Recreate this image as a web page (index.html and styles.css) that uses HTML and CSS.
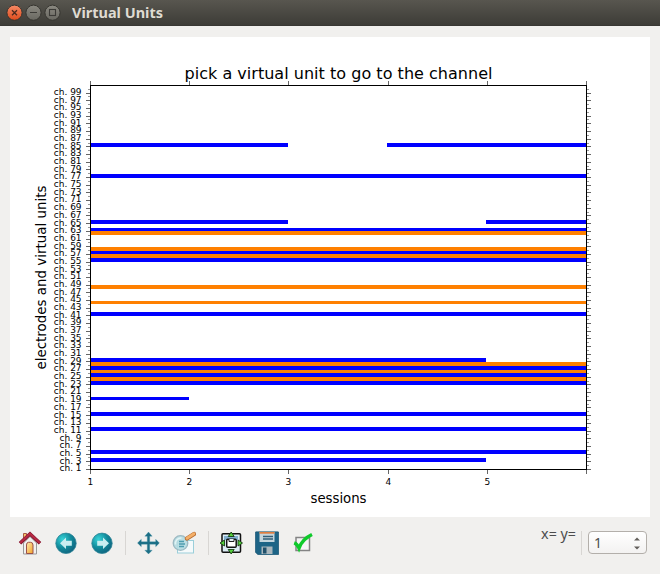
FILE: index.html
```html
<!DOCTYPE html>
<html lang="en">
<head>
<meta charset="utf-8">
<title>Virtual Units</title>
<link rel="stylesheet" href="styles.css">
</head>
<body>
<div class="window">
  <header class="titlebar">
    <svg class="controls" width="56" height="18" viewBox="0 0 56 18">
      <defs>
        <linearGradient id="closeFill" x1="0" y1="0" x2="0" y2="1"><stop offset="0" stop-color="#f58a66"/><stop offset="1" stop-color="#df4b1c"/></linearGradient>
        <linearGradient id="greyFill" x1="0" y1="0" x2="0" y2="1"><stop offset="0" stop-color="#8b8981"/><stop offset="1" stop-color="#696861"/></linearGradient>
      </defs>
      <circle cx="8.5" cy="8.7" r="7.6" fill="url(#closeFill)" stroke="#35342f"/>
      <circle cx="27.5" cy="8.7" r="7.6" fill="url(#greyFill)" stroke="#35342f"/>
      <circle cx="46.5" cy="8.7" r="7.6" fill="url(#greyFill)" stroke="#35342f"/>
      <path d="M6 6.2l5 5M11 6.2l-5 5" stroke="#4c2a1e" stroke-width="1.3"/>
      <path d="M24 8.5h7" stroke="#3c3b37"/>
      <rect x="43.5" y="5.5" width="6" height="6" fill="none" stroke="#3c3b37" stroke-width="1.1"/>
    </svg>
    <svg class="caption" width="100" height="24"><text x="0" y="17" textLength="91" lengthAdjust="spacingAndGlyphs">Virtual Units</text></svg>
  </header>
  <main class="figure">
    <svg id="chart" width="640" height="480" viewBox="10 37 640 480">
      <text class="title" x="184.5" y="79" textLength="308">pick a virtual unit to go to the channel</text>
      <g id="bars" shape-rendering="crispEdges"></g>
      <rect x="90.5" y="85.5" width="496" height="384" class="frame"/>
      <g id="ticks" shape-rendering="crispEdges"></g>
      <g id="labels"></g>
      <text class="axis" x="310.5" y="503" textLength="56">sessions</text>
      <text class="axis" transform="translate(45.5 369.5) rotate(-90)" textLength="184">electrodes and virtual units</text>
    </svg>
  </main>
  <footer class="toolbar">
    <svg class="icon" width="24" height="24" viewBox="0 0 24 24">
      <defs><linearGradient id="door" x1="0" x2="1" y2="1"><stop offset="0" stop-color="#ffe9b0"/><stop offset="1" stop-color="#f2a32a"/></linearGradient></defs>
      <path d="M5.500 10V2.500h3v6" fill="#f7c66b" stroke="#a95743"/>
      <path d="M5.500 12L12 5.500l6.500 6.500v11h-13z" fill="#f1f0ef" stroke="#999"/>
      <path d="M8.500 22.500v-8.500q0-2.700 2-2.700h2q2.500 0 2.500 2.700v8.500z" fill="url(#door)" stroke="#9c5148"/>
      <path d="M2 12.200L12 3l10 9.200" fill="none" stroke="#7d1730" stroke-width="3.600"/>
      <path d="M2 12L12 2.800 22 12" fill="none" stroke="#b72943" stroke-width="2.200"/>
    </svg>
    <svg class="icon" width="24" height="24" viewBox="0 0 24 24">
      <defs><radialGradient id="ball" cx=".33" cy=".3" r=".75"><stop offset="0" stop-color="#38d3d8"/><stop offset=".55" stop-color="#128c9c"/><stop offset="1" stop-color="#10647f"/></radialGradient></defs>
      <circle cx="12" cy="12.300" r="10.200" fill="url(#ball)" stroke="#2b8395" stroke-width=".8"/>
      <path d="M6 12.300l6-5.800v3.300h5.800v5H12v3.300z" fill="#c9eef1"/>
    </svg>
    <svg class="icon" width="24" height="24" viewBox="0 0 24 24">
      <circle cx="12" cy="12.300" r="10.200" fill="url(#ball)" stroke="#2b8395" stroke-width=".8"/>
      <path d="M19 12.300l-6-5.800v3.300H7.200v5H13v3.300z" fill="#c9eef1"/>
    </svg>
    <span class="divider"></span>
    <svg class="icon" width="24" height="24" viewBox="0 0 24 24">
      <path d="M12.500 1l3.700 4.200h-2.500v5.600h6V8.300l3.700 3.700-3.700 3.700v-2.500h-6v6h2.500L12.500 23l-3.700-3.800h2.500v-6h-6v2.500L1.500 12l3.800-3.700v2.500h6V5.200H8.800z" fill="#1b6f86" stroke="#398aa0" stroke-width=".3"/>
    </svg>
    <svg class="icon zoomer" width="24" height="24" viewBox="0 0 24 24">
      <rect x="5.500" y="9.500" width="16" height="12.500" fill="#f5fafb" stroke="#9bcfda"/>
      <circle cx="8.500" cy="12" r="7.300" fill="#b5dce1" fill-opacity=".9" stroke="#9cb9c2" stroke-width="1.300"/>
      <path d="M3.500 13.500a5.500 5.500 0 0 1 6-6.500" fill="none" stroke="#e1f3f4" stroke-width="1.500"/>
      <path d="M7 10.500h5M7 13h6M7 15.500h5" stroke="#4f9daf" stroke-width="1.300"/>
      <path d="M15 7.500L22 3" stroke="#b56c32" stroke-width="4.300" stroke-linecap="round"/>
      <path d="M15 7.200L22 2.800" stroke="#f4af68" stroke-width="2.800" stroke-linecap="round"/>
    </svg>
    <span class="divider"></span>
    <svg class="icon" width="24" height="24" viewBox="0 0 24 24">
      <rect x="3" y="2.800" width="18.500" height="18.500" rx="1" fill="#dcecf5" stroke="#111" stroke-width="1.500"/>
      <path d="M5 5h14v4H5z" fill="#83b1d1"/>
      <path d="M12.200 1l3 4.500h-6zM12.200 23l3-4.500h-6zM1 12l4.500-3v6zM23.500 12L19 9v6z" fill="#55cf3e" stroke="#173c12" stroke-width=".9"/>
      <rect x="7.700" y="8.200" width="9.500" height="8" rx="1" fill="#fff" stroke="#111" stroke-width="1.500"/>
      <path d="M10 8v2.500h5V8" fill="#e3edf3" stroke="#222"/>
    </svg>
    <svg class="icon" width="24" height="24" viewBox="0 0 24 24">
      <path d="M1 .8h22q.8 0 .8.8v21.300q0 .8-.8.800H3l-2.700-2.500V1.600Q.3.800 1 .8z" fill="#1d6486" stroke="#174f6c" stroke-width=".6"/>
      <path d="M4.500 1h15v10h-15z" fill="#c3d5dd"/><path d="M4.500 1h15v1.700h-15z" fill="#df7d3f"/>
      <path d="M8 5.500h10M8 8h10" stroke="#315e77" stroke-width="1.300"/>
      <path d="M6.500 15.500h11v7.500h-11z" fill="#aab7bd"/><path d="M8 16.500h3.500v6H8z" fill="#20506b"/>
    </svg>
    <svg class="icon" width="24" height="24" viewBox="0 0 24 24">
      <rect x="5" y="6.500" width="13.500" height="13" fill="#f5f5f5" stroke="#848484" stroke-width="1.500"/>
      <path d="M3.200 11.800q3 1 4.800 5.200 3.500-9 13-13.500" fill="none" stroke="#0fca2b" stroke-width="3.500"/>
    </svg>
    <span class="coords">x= y=</span>
    <span class="divider last"></span>
    <div class="spin"><span>1</span>
      <svg width="8" height="15" viewBox="0 0 8 15"><path d="M1 5.500L4 2.500l3 3zM1 11.500l3 3 3-3z" fill="#625f5b"/></svg>
    </div>
  </footer>
</div>
<script src="chart.js"></script>
</body>
</html>
```
FILE: chart.js
```js
const NS = 'http://www.w3.org/2000/svg';
const add = (parent, tag, attrs, text) => {
  const el = document.createElementNS(NS, tag);
  for (const key in attrs) el.setAttribute(key, attrs[key]);
  if (text) el.textContent = text;
  document.getElementById(parent).appendChild(el);
};
// [top, height, kind, left, right]
const bars = [
  [143,4,'b',91,288],[143,4,'b',387,586],[174,4,'b',91,586],
  [220,4,'b',91,288],[220,4,'b',486,586],[228,3,'b',91,586],
  [231,4,'o',91,586],[247,4,'o',91,586],[251,3,'b',91,586],
  [254,4,'o',91,586],[258,4,'b',91,586],[285,4,'o',91,586],
  [301,3,'o',91,586],[312,4,'b',91,586],[358,4,'b',91,486],
  [362,4,'o',91,586],[366,4,'b',91,586],[370,3,'o',91,586],
  [373,4,'b',91,586],[377,4,'o',91,586],[381,4,'b',91,586],
  [397,3,'b',91,189],[412,4,'b',91,586],[427,4,'b',91,586],
  [450,4,'b',91,586],[458,4,'b',91,486]
];
for (const [y, height, kind, x, end] of bars)
  add('bars', 'rect', { x, y, height, width: end - x, class: kind });

for (let n = 1; n <= 100; n++) {
  const pos = 469.4 - (n - 1) * 3.84;
  const y = Math.floor(pos);
  const major = n % 2 === 1;
  const width = major ? 4 : 2;
  const cls = major ? 'tick' : 'minor';
  add('ticks', 'rect', { x: 90 - width, y, width, height: 1, class: cls });
  add('ticks', 'rect', { x: 587, y, width, height: 1, class: cls });
  if (major) add('labels', 'text', { x: 81.6, y: Math.round(pos + 1.9), class: 'small end' }, 'ch. ' + n);
}
[90, 189, 288, 388, 487, 586].forEach((x, i) => {
  add('ticks', 'rect', { x, y: 81, width: 1, height: 4, class: 'tick' });
  add('ticks', 'rect', { x, y: 470, width: 1, height: 4, class: 'tick' });
  if (i < 5) add('labels', 'text', { x: x + 0.4, y: 485, class: 'small mid' }, String(i + 1));
});
```
FILE: styles.css
```css
* { box-sizing: border-box; }
body { margin: 0; background: #f1f0ee; }
.window { width: 660px; height: 574px; display: flex; flex-direction: column; overflow: hidden; }
.titlebar {
  height: 26px; flex: none; display: flex; align-items: center; gap: 10px; padding-left: 6px;
  background: linear-gradient(#58564f, #3d3c37); border-bottom: 1px solid #383733;
}
.caption { font: bold 14px "Noto Sans", sans-serif; fill: #dfdbd2; }
.figure { margin: 11px 10px 0; height: 480px; flex: none; background: #fff; }
.figure svg { display: block; font-family: "DejaVu Sans", sans-serif; fill: #000; }
.title { font-size: 16px; }
.axis { font-size: 13.33px; }
.small { font-size: 9px; }
.end { text-anchor: end; }
.mid { text-anchor: middle; }
.frame { fill: none; stroke: #000; }
.b { fill: #00f; }
.o { fill: #ff8000; }
.tick { fill: #666; }
.minor { fill: #999; }
.toolbar { height: 57px; display: flex; padding: 14px 13px 0 18px; }
.icon { flex: none; margin-right: 12px; }
.icon.zoomer { margin-right: 13px; }
.divider { flex: none; width: 1px; height: 24px; background: #d8d6d3; margin: 0 10px 0 -1px; }
.coords { margin-left: auto; margin-top: -6px; font: 14.3px/18px "Noto Sans", sans-serif; color: #4c4c4c; white-space: nowrap; }
.divider.last { margin: 0 6px 0 5px; }
.spin {
  width: 59px; height: 23px; flex: none; display: flex; align-items: center; justify-content: space-between;
  padding: 0 5px; border: 1px solid #b3afaa; border-radius: 4px;
  background: linear-gradient(#fff, #f3f2f1); font: 14px "Noto Sans", sans-serif; color: #4c4c4c;
}
```
